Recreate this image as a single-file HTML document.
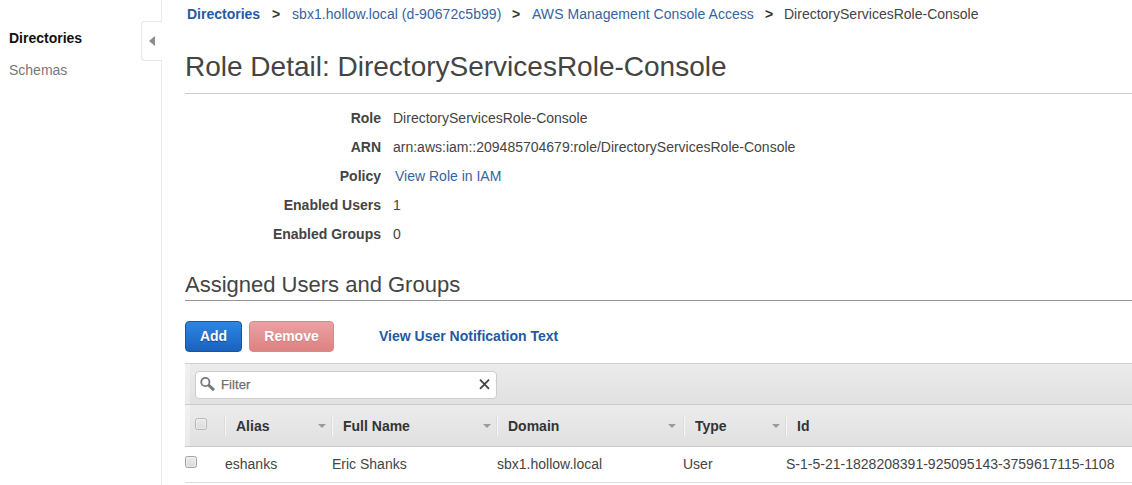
<!DOCTYPE html>
<html>
<head>
<meta charset="utf-8">
<title>Role Detail</title>
<style>
html,body{margin:0;padding:0;background:#fff;}
body{width:1132px;height:485px;overflow:hidden;position:relative;font-family:"Liberation Sans",Arial,sans-serif;color:#444;font-size:14px;}
.abs{position:absolute;white-space:nowrap;}
#sidebar{position:absolute;left:0;top:0;width:161px;height:485px;border-right:1px solid #ebebeb;}
#tab{position:absolute;left:141px;top:21px;width:20px;height:38px;border:1px solid #e6e6e6;border-right:none;border-radius:4px 0 0 4px;background:#fff;}
#tab:after{content:"";position:absolute;left:7px;top:14px;border-right:6px solid #8c8c8c;border-top:5.5px solid transparent;border-bottom:5.5px solid transparent;}
.nav1{left:9px;top:30px;font-weight:bold;color:#111;font-size:14px;line-height:16px;}
.nav2{left:9px;top:62px;color:#777;font-size:14px;line-height:16px;}
.bc{top:6px;font-size:14px;line-height:16px;}
.link{color:#37639f;}
h1{position:absolute;margin:0;left:185px;top:51px;font-size:28px;line-height:32px;font-weight:normal;color:#444;white-space:nowrap;}
.hr{position:absolute;left:185px;right:0;height:1px;background:#ccc;}
.lbl{position:absolute;right:751px;font-weight:bold;color:#444;font-size:14px;line-height:16px;white-space:nowrap;}
.val{position:absolute;left:393px;font-size:14px;line-height:16px;color:#444;white-space:nowrap;}
.val.link{color:#37639f;}
h2{position:absolute;margin:0;left:185px;top:272px;font-size:22px;line-height:26px;font-weight:normal;color:#444;white-space:nowrap;}
.btn{position:absolute;top:321px;height:31px;box-sizing:border-box;border-radius:4px;color:#fff;font-weight:bold;font-size:14px;line-height:29px;text-align:center;text-shadow:0 1px 1px rgba(0,0,0,.35);}
#add{left:185px;width:57px;border:1px solid #1b539c;background:linear-gradient(#2d85e4,#1b62be);}
#remove{left:249px;width:85px;border:1px solid #d68a8b;background:linear-gradient(#e9a2a3,#de8182);text-shadow:0 1px 1px rgba(0,0,0,.12);}
#toolbar{position:absolute;left:185px;right:0;top:363px;height:42px;background:linear-gradient(#ebebeb,#e1e1e1);border-top:1px solid #cfcfcf;border-bottom:1px solid #cacaca;box-sizing:border-box;}
#filter{position:absolute;left:195px;top:371px;width:302px;height:28px;box-sizing:border-box;border:1px solid #ccc;border-radius:4px;background:#fff;}
#thead{position:absolute;left:185px;right:0;top:405px;height:42px;background:linear-gradient(#ececec,#e0e0e0);border-bottom:1px solid #cacaca;box-sizing:border-box;}
.th{position:absolute;top:418px;font-weight:bold;font-size:14px;line-height:16px;color:#333;white-space:nowrap;}
.td{position:absolute;top:456px;font-size:14px;line-height:16px;color:#444;white-space:nowrap;}
.sep{position:absolute;top:416px;width:1px;height:20px;background:#dbdbdb;border-right:1px solid #f6f6f6;}
.caret{position:absolute;top:424px;width:0;height:0;border-left:4px solid transparent;border-right:4px solid transparent;border-top:4px solid #9a9a9a;}
.cb{position:absolute;width:10px;height:10px;border:1px solid #a2a2a2;border-radius:2.5px;background:linear-gradient(#ececec,#dadada);box-sizing:content-box;box-shadow:inset 0 0 0 1px rgba(255,255,255,.35);}
</style>
</head>
<body>
<div id="sidebar"></div>
<div id="tab"></div>
<div class="abs nav1">Directories</div>
<div class="abs nav2">Schemas</div>

<div class="abs bc link" style="left:187px;font-weight:bold;color:#2759a5;">Directories</div>
<div class="abs bc" style="left:272px;font-weight:bold;color:#333;">&gt;</div>
<div class="abs bc link" style="left:292px;letter-spacing:0.05px;">sbx1.hollow.local (d-90672c5b99)</div>
<div class="abs bc" style="left:512px;font-weight:bold;color:#333;">&gt;</div>
<div class="abs bc link" style="left:532px;letter-spacing:0.05px;">AWS Management Console Access</div>
<div class="abs bc" style="left:765px;font-weight:bold;color:#333;">&gt;</div>
<div class="abs bc" style="left:784px;color:#444;">DirectoryServicesRole-Console</div>

<h1>Role Detail: DirectoryServicesRole-Console</h1>
<div class="hr" style="top:93px;"></div>

<div class="lbl" style="top:110px;">Role</div><div class="val" style="top:110px;">DirectoryServicesRole-Console</div>
<div class="lbl" style="top:139px;">ARN</div><div class="val" style="top:139px;">arn:aws:iam::209485704679:role/DirectoryServicesRole-Console</div>
<div class="lbl" style="top:168px;">Policy</div><div class="val link" style="top:168px;left:395px;">View Role in IAM</div>
<div class="lbl" style="top:197px;">Enabled Users</div><div class="val" style="top:197px;">1</div>
<div class="lbl" style="top:226px;">Enabled Groups</div><div class="val" style="top:226px;">0</div>

<h2>Assigned Users and Groups</h2>
<div class="hr" style="top:300px;background:#979797;"></div>

<div class="btn" id="add">Add</div>
<div class="btn" id="remove">Remove</div>
<div class="abs" style="left:379px;top:328px;font-weight:bold;font-size:14px;line-height:16px;color:#1f5aa5;">View User Notification Text</div>

<div id="toolbar"></div>
<div class="abs" style="left:185px;top:364px;width:5px;height:40px;background:rgba(255,255,255,.3);"></div>
<div id="filter"></div>
<svg class="abs" style="left:199px;top:376px;" width="18" height="17" viewBox="0 0 18 17"><circle cx="6.35" cy="6.05" r="4.1" fill="none" stroke="#787878" stroke-width="1.8"/><path d="M9.4 8.9 L15 14.1" stroke="#787878" stroke-width="2.9"/></svg>
<div class="abs" style="left:221px;top:377px;font-size:13px;line-height:16px;color:#6e6e6e;-webkit-text-stroke:0.25px #6e6e6e;letter-spacing:0.1px;">Filter</div>
<svg class="abs" style="left:478px;top:378px;" width="13" height="13" viewBox="0 0 13 13"><path d="M2 1.6 L11 10.8 M11 1.6 L2 10.8" stroke="#454545" stroke-width="1.8" fill="none"/></svg>
<div id="thead"></div>
<div class="abs" style="left:185px;top:405px;width:5px;height:41px;background:rgba(255,255,255,.3);"></div>
<div class="cb" style="left:195px;top:418px;border-color:#b6b6b6;background:linear-gradient(#e9e9e9,#dddddd);"></div>
<div class="cb" style="left:185px;top:456px;"></div>
<div class="sep" style="left:224px;"></div>
<div class="sep" style="left:331px;"></div>
<div class="sep" style="left:496px;"></div>
<div class="sep" style="left:683px;"></div>
<div class="sep" style="left:785px;"></div>
<div class="caret" style="left:318px;"></div>
<div class="caret" style="left:483px;"></div>
<div class="caret" style="left:668px;"></div>
<div class="caret" style="left:772px;"></div>
<div class="th" style="left:236px;">Alias</div>
<div class="th" style="left:343px;">Full Name</div>
<div class="th" style="left:508px;">Domain</div>
<div class="th" style="left:695px;">Type</div>
<div class="th" style="left:797px;">Id</div>
<div class="td" style="left:225px;">eshanks</div>
<div class="td" style="left:332px;">Eric Shanks</div>
<div class="td" style="left:497px;">sbx1.hollow.local</div>
<div class="td" style="left:683px;">User</div>
<div class="td" style="left:786px;letter-spacing:0.01px;">S-1-5-21-1828208391-925095143-3759617115-1108</div>
<div class="hr" style="top:482px;background:#ddd;"></div>
</body>
</html>
